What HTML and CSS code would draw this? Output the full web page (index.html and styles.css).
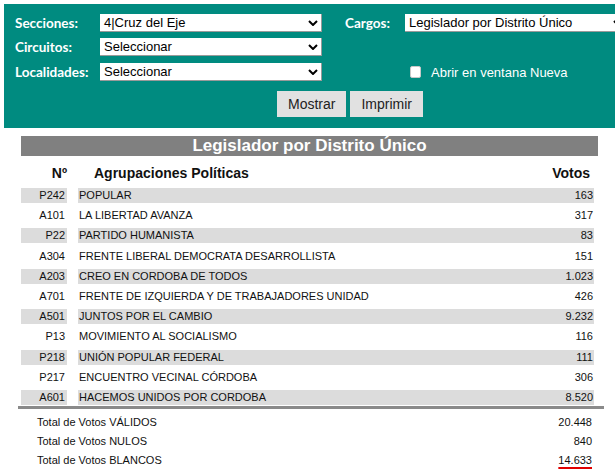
FILE: index.html
```html
<!DOCTYPE html>
<html lang="es">
<head>
<meta charset="utf-8">
<title>Resultados</title>
<link rel="stylesheet" href="styles.css">
</head>
<body>
<form class="panel">
  <div class="frow">
    <span class="lbl">Secciones:</span>
    <div class="sel"><span>4|Cruz del Eje</span><svg class="chev" width="10" height="6" viewBox="0 0 10 6"><path d="M1 1 L5 5 L9 1" fill="none" stroke="#000" stroke-width="2"/></svg></div>
    <span class="lbl lbl-cargos">Cargos:</span>
    <div class="sel"><span>Legislador por Distrito Único</span><svg class="chev" width="10" height="6" viewBox="0 0 10 6"><path d="M1 1 L5 5 L9 1" fill="none" stroke="#000" stroke-width="2"/></svg></div>
  </div>
  <div class="frow">
    <span class="lbl">Circuitos:</span>
    <div class="sel"><span>Seleccionar</span><svg class="chev" width="10" height="6" viewBox="0 0 10 6"><path d="M1 1 L5 5 L9 1" fill="none" stroke="#000" stroke-width="2"/></svg></div>
  </div>
  <div class="frow frow-3">
    <span class="lbl">Localidades:</span>
    <div class="sel"><span>Seleccionar</span><svg class="chev" width="10" height="6" viewBox="0 0 10 6"><path d="M1 1 L5 5 L9 1" fill="none" stroke="#000" stroke-width="2"/></svg></div>
    <span class="check"></span>
    <span class="check-lbl">Abrir en ventana Nueva</span>
  </div>
  <div class="brow">
    <span class="btn">Mostrar</span>
    <span class="btn">Imprimir</span>
  </div>
</form>

<div class="results">
  <div class="title">Legislador por Distrito Único</div>
  <div class="head">
    <span class="num">Nº</span>
    <span class="name"><span>Agrupaciones Políticas</span><span>Votos</span></span>
  </div>
  <div class="rows">
    <div class="row alt"><span class="num">P242</span><span class="name"><span>POPULAR</span><span>163</span></span></div>
    <div class="row"><span class="num">A101</span><span class="name"><span>LA LIBERTAD AVANZA</span><span>317</span></span></div>
    <div class="row alt"><span class="num">P22</span><span class="name"><span>PARTIDO HUMANISTA</span><span>83</span></span></div>
    <div class="row"><span class="num">A304</span><span class="name"><span>FRENTE LIBERAL DEMOCRATA DESARROLLISTA</span><span>151</span></span></div>
    <div class="row alt"><span class="num">A203</span><span class="name"><span>CREO EN CORDOBA DE TODOS</span><span>1.023</span></span></div>
    <div class="row"><span class="num">A701</span><span class="name"><span>FRENTE DE IZQUIERDA Y DE TRABAJADORES UNIDAD</span><span>426</span></span></div>
    <div class="row alt"><span class="num">A501</span><span class="name"><span>JUNTOS POR EL CAMBIO</span><span>9.232</span></span></div>
    <div class="row"><span class="num">P13</span><span class="name"><span>MOVIMIENTO AL SOCIALISMO</span><span>116</span></span></div>
    <div class="row alt"><span class="num">P218</span><span class="name"><span>UNIÓN POPULAR FEDERAL</span><span>111</span></span></div>
    <div class="row"><span class="num">P217</span><span class="name"><span>ENCUENTRO VECINAL CÓRDOBA</span><span>306</span></span></div>
    <div class="row alt"><span class="num">A601</span><span class="name"><span>HACEMOS UNIDOS POR CORDOBA</span><span>8.520</span></span></div>
  </div>
  <div class="totals">
    <div class="trow"><span>Total de Votos VÁLIDOS</span><span>20.448</span></div>
    <div class="trow"><span>Total de Votos NULOS</span><span>840</span></div>
    <div class="trow"><span>Total de Votos BLANCOS</span><span class="red-ul">14.633</span></div>
  </div>
</div>
</body>
</html>
```

FILE: styles.css
```css
html, body {
  margin: 0;
  padding: 0;
  overflow: hidden;
  background: #fff;
  font-family: "Liberation Sans", Arial, sans-serif;
  color: #111;
}

.panel {
  margin: 4px 0 0 4px;
  width: 700px;
  box-sizing: border-box;
  background: #008b80;
  padding: 10px 0 11px 11px;
}

.frow {
  display: flex;
  align-items: center;
  height: 18px;
  margin-bottom: 6px;
}

.frow-3 {
  margin-top: 7px;
  margin-bottom: 10px;
}

.lbl {
  width: 85px;
  font-family: Lato, "Open Sans", sans-serif;
  font-weight: 700;
  font-size: 13.5px;
  color: #fff;
  white-space: nowrap;
}

.lbl-cargos {
  width: 60px;
  margin-left: 23px;
}

.sel {
  width: 222px;
  height: 18px;
  box-sizing: border-box;
  flex: none;
  display: flex;
  align-items: center;
  justify-content: space-between;
  background: #fff;
  border-right: 1px solid #9a9a9a;
  border-bottom: 1px solid #9a9a9a;
  padding: 0 3px 0 4px;
  font-size: 13px;
  color: #000;
  white-space: nowrap;
}

.chev {
  flex: none;
}

.check {
  width: 11px;
  height: 12px;
  box-sizing: border-box;
  margin-left: 88px;
  background: #fff;
  border: 1px solid #c8c8c8;
  border-radius: 2px;
}

.check-lbl {
  margin-left: 10px;
  font-size: 13px;
  color: #fff;
  white-space: nowrap;
}

.brow {
  display: flex;
  gap: 4px;
  padding-left: 262px;
}

.btn {
  height: 26px;
  line-height: 26px;
  padding: 0 11px;
  background: #e1e1e1;
  font-size: 14px;
  color: #222;
}

.results {
  width: 586px;
  margin: 8px 0 0 18px;
}

.title {
  margin: 0 6px 0 3px;
  height: 20px;
  line-height: 20px;
  background: #808080;
  color: #fff;
  font-weight: 700;
  font-size: 17px;
  text-align: center;
}

.head {
  display: grid;
  grid-template-columns: 46px 516px;
  column-gap: 11px;
  margin: 7px 0 0 3px;
  height: 20px;
  align-items: center;
  font-weight: 700;
  font-size: 14px;
  color: #111;
}

.head .num {
  text-align: right;
}

.head .name {
  display: flex;
  justify-content: space-between;
  padding: 0 4px 0 16px;
}

.rows {
  display: flex;
  flex-direction: column;
  gap: 5.2px;
  margin: 5px 0 0 3px;
}

.row {
  display: grid;
  grid-template-columns: 46px 516px;
  column-gap: 11px;
  height: 15px;
  font-size: 11px;
  line-height: 15px;
  color: #111;
}

.row .num {
  text-align: right;
  padding-right: 2px;
}

.row .name {
  display: flex;
  justify-content: space-between;
  padding: 0 1px 0 1px;
}

.row.alt .num,
.row.alt .name {
  background: #dcdcdc;
}

.totals {
  border-top: 3px solid #8a8a8a;
  margin-top: 1px;
  padding: 4px 12px 0 19px;
}

.trow {
  display: flex;
  justify-content: space-between;
  height: 19px;
  line-height: 19px;
  font-size: 11px;
  color: #111;
}

.red-ul {
  text-decoration: underline;
  text-decoration-color: #e00000;
  text-decoration-thickness: 2px;
  text-underline-offset: 3px;
}
```
